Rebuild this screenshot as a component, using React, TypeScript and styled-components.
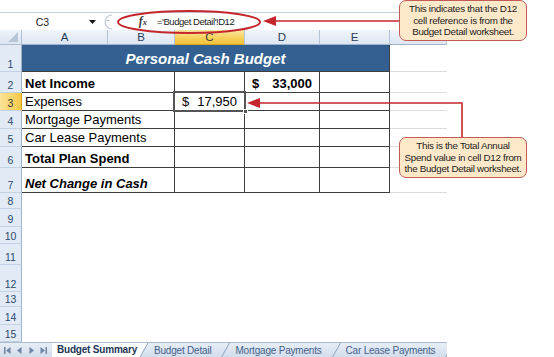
import styled, { createGlobalStyle } from 'styled-components';

const SANS = `'Liberation Sans', Arial, sans-serif`;
const RED = '#c3262c';
const LINE = '#3e3e3e';

const GlobalStyle = createGlobalStyle`
  *, *::before, *::after { box-sizing: border-box; }
  html, body { margin: 0; padding: 0; background: #fff; }
  body { font-family: ${SANS}; color: #000; }
`;

const Page = styled.div`
  position: relative;
  width: 554px;
  height: 357px;
  overflow: hidden;
  background: #fff;
`;

const Sheet = styled.div`
  width: 447px;
  padding-top: 12px;
  display: flex;
  flex-direction: column;
`;

const FormulaBar = styled.div`
  height: 18px;
  display: flex;
  align-items: center;
  border-top: 1px solid #c3cdd9;
  background: #fff;
`;

const NameBox = styled.div`
  width: 100px;
  flex-shrink: 0;
  height: 100%;
  display: flex;
  align-items: center;
`;

const NameText = styled.div`
  width: 85px;
  text-align: center;
  font-size: 10.5px;
  color: #222;
`;

const DropArrow = styled.div`
  width: 15px;
  display: flex;
  justify-content: center;
`;

const Splitter = styled.div`
  width: 18px;
  flex-shrink: 0;
  height: 100%;
  display: flex;
  align-items: center;
  padding-left: 2px;
`;

const FxButton = styled.div`
  width: 35px;
  flex-shrink: 0;
  display: flex;
  align-items: baseline;
  justify-content: flex-end;
  padding-right: 6px;
  font-family: 'Liberation Serif', 'Times New Roman', serif;
  font-style: italic;
  font-weight: bold;
  font-size: 12px;
  color: #3a3a3a;

  span {
    font-size: 8.5px;
  }
`;

const FormulaText = styled.div`
  padding-left: 4px;
  font-size: 9.5px;
  letter-spacing: -0.45px;
  color: #222;
  white-space: nowrap;
`;

const Grid = styled.div`
  display: grid;
  grid-template-columns: 22px 86px 67px 70px 75px 70px 57px;
  grid-template-rows: 15px 27px 21px 18px 18px 18px 21px 25px 16px 18px 17px 21px 27px 15px 18px 17px;
`;

const Corner = styled.div`
  background: linear-gradient(#eef3fa, #dbe5f2);
  border-right: 1px solid #aebfd4;
  border-bottom: 1px solid #aebfd4;
  display: flex;
  align-items: flex-end;
  justify-content: flex-end;
  padding: 0 3px 2px 0;
`;

const ColHead = styled.div<{ $active?: boolean }>`
  display: flex;
  align-items: center;
  justify-content: center;
  font-size: 11.5px;
  color: ${({ $active }) => ($active ? '#3a3a3a' : '#27405e')};
  background: ${({ $active }) =>
    $active ? 'linear-gradient(#fbe7a4, #f6cf58 60%, #f1c13a)' : 'linear-gradient(#f1f5fb, #dde6f2)'};
  border-right: 1px solid #b4c4d8;
  border-bottom: 1px solid ${({ $active }) => ($active ? '#d9a21c' : '#9fb3cc')};
`;

const RowHead = styled.div<{ $active?: boolean }>`
  display: flex;
  align-items: flex-end;
  justify-content: center;
  padding-bottom: 1px;
  font-size: 10.5px;
  color: ${({ $active }) => ($active ? '#3a3a3a' : '#2c4a70')};
  background: ${({ $active }) => ($active ? 'linear-gradient(90deg, #fbe39a, #f4c846)' : '#e2eaf5')};
  border-right: 1px solid ${({ $active }) => ($active ? '#d9a21c' : '#9fb3cc')};
  border-bottom: 1px solid #c3d1e3;
`;

const TitleCell = styled.div`
  grid-column: span 5;
  display: flex;
  align-items: center;
  justify-content: center;
  background: #335f91;
  color: #fff;
  font-weight: bold;
  font-style: italic;
  font-size: 15px;
  border-right: 1px solid ${LINE};
  border-bottom: 1px solid ${LINE};
`;

const LabelCell = styled.div<{ $bold?: boolean; $italic?: boolean }>`
  grid-column: span 2;
  display: flex;
  align-items: flex-end;
  padding: 0 0 1px 3px;
  font-size: 13px;
  line-height: 15px;
  font-weight: ${({ $bold }) => ($bold ? 'bold' : 'normal')};
  font-style: ${({ $italic }) => ($italic ? 'italic' : 'normal')};
  border-right: 1px solid ${LINE};
  border-bottom: 1px solid ${LINE};
  white-space: nowrap;
`;

const ValueCell = styled.div<{ $bold?: boolean; $selected?: boolean }>`
  position: relative;
  display: flex;
  align-items: flex-end;
  justify-content: space-between;
  padding: 0 7px 1px 7px;
  font-size: 13px;
  line-height: 15px;
  font-weight: ${({ $bold }) => ($bold ? 'bold' : 'normal')};
  border-right: 1px solid ${LINE};
  border-bottom: 1px solid ${LINE};

  ${({ $selected }) =>
    $selected &&
    `
    &::after {
      content: '';
      position: absolute;
      left: -2px;
      top: -2px;
      right: -2px;
      bottom: -2px;
      border: 2px solid #555;
    }
    &::before {
      content: '';
      position: absolute;
      right: -4px;
      bottom: -4px;
      width: 5px;
      height: 5px;
      background: #555;
      border: 1px solid #fff;
      z-index: 1;
    }
  `}
`;

const EmptyCell = styled.div<{ $faint?: boolean }>`
  border-bottom: 1px solid ${({ $faint }) => ($faint ? '#dcdcdc' : 'transparent')};
`;

const BlankRow = styled.div`
  grid-column: span 6;
`;

const TabBar = styled.div`
  height: 15px;
  display: flex;
  align-items: stretch;
  overflow: hidden;
  background: linear-gradient(#e6edf6, #d3deec);
  border-top: 1px solid #a9bcd4;
`;

const TabNav = styled.div`
  width: 52px;
  flex-shrink: 0;
  display: flex;
  align-items: center;
  gap: 5px;
  padding-left: 4px;
`;

const Tab = styled.div<{ $active?: boolean }>`
  flex-shrink: 0;
  display: flex;
  align-items: center;
  padding: ${({ $active }) => ($active ? '0 2px 0 5px' : '0 9px 0 5px')};
  margin-top: ${({ $active }) => ($active ? '-1px' : '0')};
  font-size: 10px;
  letter-spacing: -0.2px;
  font-weight: ${({ $active }) => ($active ? 'bold' : 'normal')};
  color: ${({ $active }) => ($active ? '#1d3557' : '#44618a')};
  background: ${({ $active }) => ($active ? '#fff' : 'transparent')};
  white-space: nowrap;
`;

const Callout = styled.div<{ $top: number }>`
  position: absolute;
  left: 399px;
  top: ${({ $top }) => $top}px;
  width: 128px;
  height: 41px;
  padding-top: 2px;
  border: 1.5px solid #c25a56;
  border-radius: 7px;
  background: #fde9c9;
  font-size: 9.8px;
  letter-spacing: -0.3px;
  line-height: 11.7px;
  color: #1c1c1c;
  text-align: center;
  white-space: nowrap;
`;

const Overlay = styled.svg`
  position: absolute;
  left: 0;
  top: 0;
  pointer-events: none;
`;

const Tri = ({ d }: { d: string }) => (
  <svg width="7" height="7" viewBox="0 0 7 7" style={{ flexShrink: 0 }}>
    <path d={d} fill="#6f86a6" />
  </svg>
);

type Row = {
  n: number;
  label: string;
  bold?: boolean;
  italic?: boolean;
  c?: string;
  d?: string;
};

const rows: Row[] = [
  { n: 2, label: 'Net Income', bold: true, d: '33,000' },
  { n: 3, label: 'Expenses', c: '17,950' },
  { n: 4, label: 'Mortgage Payments' },
  { n: 5, label: 'Car Lease Payments' },
  { n: 6, label: 'Total Plan Spend', bold: true },
  { n: 7, label: 'Net Change in Cash', bold: true, italic: true },
];

const Amount = ({ value }: { value?: string }) =>
  value ? (
    <>
      <span>$</span>
      <span>{value}</span>
    </>
  ) : null;

const Slant = ({ white }: { white?: boolean }) => (
  <svg width="10" height="15" viewBox="0 0 10 15" style={{ display: 'block', flexShrink: 0, marginTop: white ? -1 : 0 }}>
    {white && <polygon points="0,0 0,15 1,15 9,0" fill="#fff" />}
    <line x1="1" y1="15" x2="9.5" y2="0" stroke="#8ea3bf" strokeWidth="1" />
  </svg>
);

export default function App() {
  return (
    <Page>
      <GlobalStyle />
      <Sheet>
        <FormulaBar>
          <NameBox>
            <NameText>C3</NameText>
            <DropArrow>
              <svg width="7" height="4" viewBox="0 0 7 4">
                <path d="M0 0 H7 L3.5 4 Z" fill="#111" />
              </svg>
            </DropArrow>
          </NameBox>
          <Splitter>
            <svg width="12" height="16" viewBox="0 0 12 16">
              <path d="M10 1 A7 7 0 0 0 10 15" fill="none" stroke="#bcc6d2" strokeWidth="1.2" />
              <line x1="4.5" y1="6.5" x2="7.5" y2="6.5" stroke="#a9b4c2" strokeWidth="1" />
            </svg>
          </Splitter>
          <FxButton>
            f<span>x</span>
          </FxButton>
          <FormulaText>='Budget Detail'!D12</FormulaText>
        </FormulaBar>

        <Grid>
          <Corner>
            <svg width="10" height="10" viewBox="0 0 10 10">
              <path d="M10 0 V10 H0 Z" fill="#b7c5d6" />
            </svg>
          </Corner>
          {['A', 'B', 'C', 'D', 'E', 'F'].map((c) => (
            <ColHead key={c} $active={c === 'C'}>
              {c}
            </ColHead>
          ))}

          <RowHead>1</RowHead>
          <TitleCell>Personal Cash Budget</TitleCell>
          <EmptyCell $faint />

          {rows.map((r) => (
            <>
              <RowHead key={`h${r.n}`} $active={r.n === 3}>
                {r.n}
              </RowHead>
              <LabelCell key={`l${r.n}`} $bold={r.bold} $italic={r.italic}>
                {r.label}
              </LabelCell>
              <ValueCell key={`c${r.n}`} $selected={r.n === 3}>
                <Amount value={r.c} />
              </ValueCell>
              <ValueCell key={`d${r.n}`} $bold>
                <Amount value={r.d} />
              </ValueCell>
              <ValueCell key={`e${r.n}`} />
              <EmptyCell key={`f${r.n}`} $faint />
            </>
          ))}

          {[8, 9, 10, 11, 12, 13, 14, 15].map((n) => (
            <>
              <RowHead key={`h${n}`}>{n}</RowHead>
              <BlankRow key={`b${n}`} />
            </>
          ))}
        </Grid>

        <TabBar>
          <TabNav>
            <Tri d="M0 0 H1.5 V7 H0 Z M6.5 0 V7 L2 3.5 Z" />
            <Tri d="M5.5 0 V7 L1 3.5 Z" />
            <Tri d="M1.5 0 V7 L6 3.5 Z" />
            <Tri d="M0.5 0 V7 L5 3.5 Z M5.5 0 H7 V7 H5.5 Z" />
          </TabNav>
          <Tab $active>Budget Summary</Tab>
          <Slant white />
          <Tab>Budget Detail</Tab>
          <Slant />
          <Tab>Mortgage Payments</Tab>
          <Slant />
          <Tab>Car Lease Payments</Tab>
          <Slant />
        </TabBar>
      </Sheet>

      <Overlay width="554" height="357" viewBox="0 0 554 357">
        <ellipse cx="189" cy="22" rx="71" ry="11" fill="none" stroke={RED} strokeWidth="2" />
        <line x1="274" y1="21" x2="399" y2="21" stroke={RED} strokeWidth="1.6" />
        <polygon points="263,21 276,16 276,26" fill={RED} />
        <polyline points="462,137 462,103 258,103" fill="none" stroke={RED} strokeWidth="1.6" />
        <polygon points="247,103 260,98 260,108" fill={RED} />
      </Overlay>

      <Callout $top={0}>
        This indicates that the D12
        <br />
        cell reference is from the
        <br />
        Budget Detail worksheet.
      </Callout>
      <Callout $top={137}>
        This is the Total Annual
        <br />
        Spend value in cell D12 from
        <br />
        the Budget Detail worksheet.
      </Callout>
    </Page>
  );
}
